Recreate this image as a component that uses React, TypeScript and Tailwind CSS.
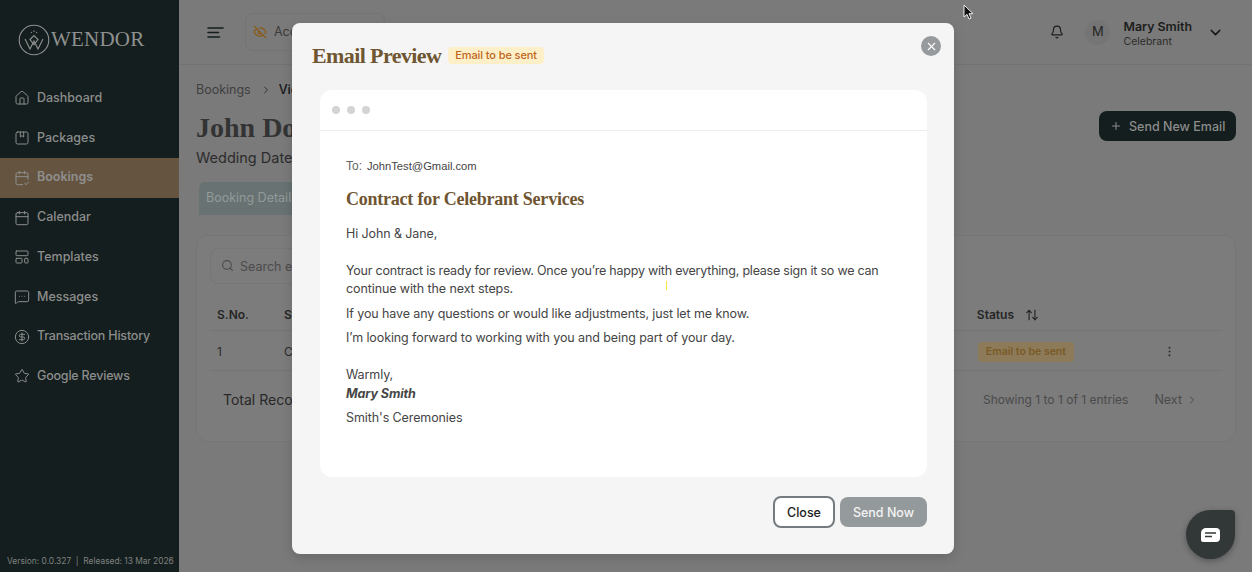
import React from "react";
import { Home, CalendarCheck2, Calendar, LayoutTemplate, MessageSquareMore, CircleDollarSign, Star, EyeOff, ChevronRight, Bell, ChevronDown, Plus, Search, ArrowUpDown, EllipsisVertical, X } from "lucide-react";

const sans = "font-['Inter','Liberation_Sans',sans-serif]";
const serif = "font-['Liberation_Serif',serif]";

function PackageIcon({ size = 16, strokeWidth = 1.5 }: { size?: number; strokeWidth?: number }) {
  return (
    <svg width={size} height={size} viewBox="0 0 24 24" fill="none" stroke="currentColor" strokeWidth={strokeWidth} strokeLinecap="round" strokeLinejoin="round">
      <rect x="3" y="3" width="18" height="18" rx="2.5" />
      <path d="M9.5 3v7.5l2.5-2 2.5 2V3" />
    </svg>
  );
}

const nav = [
  { label: "Dashboard", Icon: Home },
  { label: "Packages", Icon: PackageIcon },
  { label: "Bookings", Icon: CalendarCheck2, active: true },
  { label: "Calendar", Icon: Calendar },
  { label: "Templates", Icon: LayoutTemplate },
  { label: "Messages", Icon: MessageSquareMore },
  { label: "Transaction History", Icon: CircleDollarSign, tight: true },
  { label: "Google Reviews", Icon: Star, tight: true },
];

function Logo() {
  return (
    <svg width="32" height="32" viewBox="0 0 32 32" fill="none" stroke="#8f9190" strokeWidth="1.1">
      <circle cx="16" cy="16" r="14.8" />
      <path d="M7 15l5 10 4-8 4 8 5-10" />
      <path d="M12 15.5l4-4 4 4-4 5z" />
      <path d="M13 8l.8 1M16 6.5V8M19 8l-.8 1" />
    </svg>
  );
}

export default function App() {
  return (
    <div className={`relative flex h-[572px] w-[1252px] overflow-hidden bg-[#7a7a7a] ${sans}`}>
      <aside className="flex w-[179px] shrink-0 flex-col bg-[#151e1e]">
        <div className="flex h-[78.6px] shrink-0 items-center pl-[18px] pt-[1px]">
          <Logo />
          <span className={`ml-[1px] text-[21px] tracking-[0.2px] text-[#8f9190] ${serif}`}>WENDOR</span>
        </div>
        <nav className="flex flex-col">
          {nav.map(({ label, Icon, active, tight }) => (
            <div key={label} className={`flex h-[39.7px] items-center gap-[7px] pl-[14px] text-[12.5px] ${active ? "bg-[#655440] font-semibold text-[#8f8f8f]" : "font-medium text-[#8b8d8c]"}`}>
              <Icon size={16} strokeWidth={1.5} />
              <span className={tight ? "tracking-[-0.2px]" : ""}>{label}</span>
            </div>
          ))}
        </nav>
        <div className="mt-auto pb-[4px] pl-[7px] text-[8.4px] whitespace-nowrap text-[#7e8180]">Version: 0.0.327 &nbsp;|&nbsp; Released: 13 Mar 2026</div>
      </aside>

      <main className="flex min-w-0 flex-1 flex-col">
        <header className="flex h-[65px] shrink-0 items-center border-b border-[#737373] pl-[28px] pr-[28px]">
          <svg width="17" height="11" viewBox="0 0 17 11" fill="none" stroke="#151e1e" strokeWidth="1.6" strokeLinecap="round">
            <path d="M1 1h15M1 5.5h10.5M1 10h11.5" />
          </svg>
          <div className="ml-[21px] flex h-[38px] w-[140px] items-center gap-[7px] rounded-lg border border-[#747474] pl-[7px] text-[12.5px] text-[#3b3b3b]">
            <EyeOff size={14} className="text-[#8a5a17]" />
            <span>Access</span>
          </div>
          <div className="ml-auto flex items-center">
            <Bell size={14} className="text-[#1f1f1f]" />
            <div className="ml-[21px] flex h-[25px] w-[25px] items-center justify-center rounded-full bg-[#757575] text-[13px] text-[#252525]">M</div>
            <div className="ml-[13px] flex flex-col pt-[5px] leading-none">
              <span className="text-[12.4px] font-semibold text-[#1d1d1d]">Mary Smith</span>
              <span className="mt-[4px] text-[10.5px] text-[#2c2c2c]">Celebrant</span>
            </div>
            <ChevronDown size={17} className="ml-[15px] text-[#151515]" />
          </div>
        </header>

        <div className="flex flex-col pl-[17px] pr-[16px]">
          <div className="mt-[16px] flex items-center text-[12.5px] text-[#3f3f3f]">
            <span>Bookings</span>
            <ChevronRight size={12} className="ml-[9px] text-[#333]" />
            <span className="ml-[7px] font-medium text-[#151515]">View</span>
          </div>
          <div className="mt-[10px] flex items-start justify-between">
            <div>
              <h1 className={`text-[28px] leading-[36px] font-bold text-[#333] ${serif}`}>John Doe</h1>
              <p className="mt-[3px] text-[14.5px] leading-[18px] whitespace-nowrap text-[#2c2c2c]">Wedding Date</p>
            </div>
            <button className="mt-[1px] flex h-[30px] w-[137px] items-center gap-[7px] rounded-lg bg-[#151e1e] pl-[11px] text-[12.5px] font-medium text-[#8a8c8b]">
              <Plus size={12} />
              <span className="pt-[3px]">Send New Email</span>
            </button>
          </div>
          <div className="ml-[3px] mt-[15px] flex h-[33px] w-[120px] items-center rounded-t-md bg-[#687272] pl-[7px] text-[12.5px] whitespace-nowrap text-[#929a9a]">Booking Details</div>

          <section className="mt-[20px] h-[207px] rounded-xl border border-[#767676] bg-[#7c7c7c] px-[13px] pt-[12px]">
            <div className="flex h-[36px] w-[200px] items-center gap-[6px] rounded-lg border border-[#767676] pl-[10px] text-[12.5px] text-[#4b4b4b]">
              <Search size={13} />
              <span className="pt-[3px]">Search entries</span>
            </div>
            <div className="mt-[10px] flex h-[37px] items-center border-b border-[#747474] pl-[7px] pr-[7px] pt-[6px] text-[12px] font-semibold text-[#262626]">
              <span className="w-[67px]">S.No.</span>
              <span>Status</span>
              <span className="ml-auto mr-[176px] flex items-center gap-[11px]">
                Status <ArrowUpDown size={14} />
              </span>
            </div>
            <div className="flex h-[40px] items-center border-b border-[#747474] pl-[7px] pr-[46px] pt-[3px] text-[12px] text-[#2a2a2a]">
              <span className="w-[67px]">1</span>
              <span>Contract</span>
              <span className="ml-auto mr-[89px] rounded bg-[#8c7a58] px-[8px] py-[2px] text-[10.5px] font-semibold text-[#7a5a28]">Email to be sent</span>
              <EllipsisVertical size={13} className="text-[#333]" />
            </div>
            <div className="flex h-[56px] items-center pl-[13px] pr-[24px] pt-[2px] text-[12.5px] text-[#4a4a4a]">
              <span className="text-[14px] text-[#282828]">Total Records</span>
              <span className="ml-auto mr-[26px] text-[12px]">Showing 1 to 1 of 1 entries</span>
              <span className="flex items-center gap-[4px] pt-[1px]">
                Next <ChevronRight size={12} />
              </span>
            </div>
          </section>
        </div>
      </main>

      <svg className="absolute left-[963px] top-[4px]" width="12" height="17" viewBox="0 0 12 17">
        <path d="M1 1v12l3-2.6 2 4.6 2-.9-2-4.4h4z" fill="#111" stroke="#eee" strokeWidth="1" />
      </svg>

      <div className="absolute bottom-[13px] right-[17px] flex h-[49px] w-[49px] items-center justify-center rounded-[25px_4px_25px_25px] bg-[#323838] shadow-[0_2px_6px_rgba(0,0,0,0.3)]">
        <svg width="19" height="14" viewBox="0 0 19 14">
          <path d="M5 0h10a4 4 0 0 1 4 4v6a4 4 0 0 1-4 4H2a2 2 0 0 1-2-2V5a5 5 0 0 1 5-5z" fill="#fff" />
          <path d="M4 5h11M4 8.5h7" stroke="#323838" strokeWidth="1.5" />
        </svg>
      </div>

      <div className="absolute left-[292px] top-[23px] flex h-[531px] w-[662px] flex-col rounded-lg bg-[#f5f5f5] shadow-[0_4px_12px_rgba(0,0,0,0.15)]">
        <div className="flex h-[67px] shrink-0 items-start pl-[20px] pr-[13px] pt-[12px]">
          <h2 className={`text-[22px] leading-[42px] font-bold tracking-[-0.6px] text-[#6f5531] ${serif}`}>Email Preview</h2>
          <span className="ml-[7px] mt-[12px] rounded bg-[#fdf0c8] px-[7px] py-[1px] text-[11px] leading-[15px] font-medium tracking-[-0.1px] text-[#c0651c]">Email to be sent</span>
          <button className="ml-auto mt-[1px] flex h-[20px] w-[20px] items-center justify-center rounded-full bg-[#979a9c] text-white">
            <X size={13} strokeWidth={2} />
          </button>
        </div>

        <div className="ml-[28px] mr-[27px] h-[387px] shrink-0 rounded-xl bg-white">
          <div className="flex h-[41px] items-center gap-[7px] border-b border-[#ededed] pl-[12px]">
            <span className="h-[8px] w-[8px] rounded-full bg-[#d4d4d4]" />
            <span className="h-[8px] w-[8px] rounded-full bg-[#d4d4d4]" />
            <span className="h-[8px] w-[8px] rounded-full bg-[#d4d4d4]" />
          </div>
          <div className="pl-[26px] pr-[30px] text-[12.5px] tracking-[-0.1px] text-[#454545]">
            <div className="mt-[27px] flex items-center gap-[5px] font-['Liberation_Sans',sans-serif] leading-[16px] tracking-normal">
              <span className="text-[12px] text-[#666]">To:</span>
              <span className="text-[11.2px] text-[#444]">JohnTest@Gmail.com</span>
            </div>
            <h3 className={`mt-[12px] text-[18px] leading-[26px] font-bold tracking-[-0.23px] text-[#6f5531] ${serif}`}>Contract for Celebrant Services</h3>
            <p className="mt-[13px] leading-[18px]">Hi John &amp; Jane,</p>
            <p className="mt-[19px] leading-[18px]">
              <span className="tracking-[-0.22px]">Your contract is ready for review. Once you’re happy with everything, please sign it so we can</span> continue with the next steps.
            </p>
            <p className="mt-[7px] leading-[18px]">If you have any questions or would like adjustments, just let me know.</p>
            <p className="mt-[6px] leading-[18px]">I’m looking forward to working with you and being part of your day.</p>
            <p className="mt-[19px] leading-[18px]">Warmly,</p>
            <p className="mt-[1px] leading-[18px] font-bold italic">Mary Smith</p>
            <p className="mt-[6px] leading-[18px]">Smith's Ceremonies</p>
          </div>
        </div>

        <div className="mt-[19px] flex items-center justify-end gap-[5px] pr-[27px]">
          <button className="flex h-[32px] w-[62px] items-center justify-center rounded-lg border-2 border-[#747b7e] bg-white pt-[2px] text-[12.5px] font-medium text-[#222]">Close</button>
          <button className="flex h-[30px] w-[87px] items-center justify-center rounded-lg bg-[#949a9c] pt-[2px] text-[12.5px] font-medium text-[#f3f3f3]">Send Now</button>
        </div>
      </div>

      <div className="absolute left-[666px] top-[281px] h-[9px] w-[1px] bg-[#f5e642]" />
    </div>
  );
}
